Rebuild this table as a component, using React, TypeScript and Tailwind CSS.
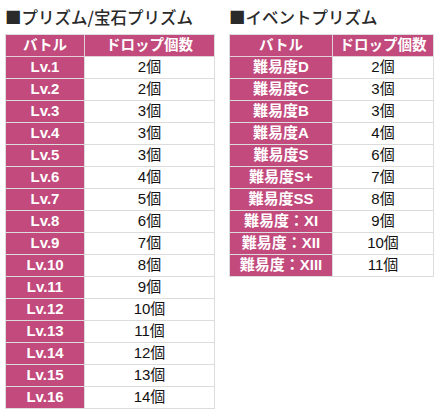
const PRISM = Array.from({ length: 16 }, (_, i) => ({
  label: `Lv.${i + 1}`,
  value: `${[2, 2, 3, 3, 3, 4, 5, 6, 7, 8, 9, 10, 11, 12, 13, 14][i]}個`,
}));

const EVENT = [
  { label: "難易度D", value: "2個" },
  { label: "難易度C", value: "3個" },
  { label: "難易度B", value: "3個" },
  { label: "難易度A", value: "4個" },
  { label: "難易度S", value: "6個" },
  { label: "難易度S+", value: "7個" },
  { label: "難易度SS", value: "8個" },
  { label: "難易度：XI", value: "9個" },
  { label: "難易度：XII", value: "10個" },
  { label: "難易度：XIII", value: "11個" },
];

type Row = { label: string; value: string };

function DropTable({
  title,
  rows,
  labelW,
  valueW,
}: {
  title: string;
  rows: Row[];
  labelW: string;
  valueW: string;
}) {
  return (
    <div className="flex flex-col">
      <h2 className="h-[34px] pt-[5px] font-['Noto_Sans_CJK_JP',sans-serif] text-[16.5px] font-medium leading-[24px] text-[#2a2a2a]">
        {title}
      </h2>
      <div className="border border-[#dcdcdc] border-b-0">
        <div className="flex h-[22px] border-b border-[#e2d0d8] bg-[#c24a7c] text-[14.5px] font-bold text-white">
          <div className={`${labelW} flex items-center justify-center border-r border-[#e2d0d8]`}>
            バトル
          </div>
          <div className={`${valueW} flex items-center justify-center`}>ドロップ個数</div>
        </div>
        {rows.map((r) => (
          <div key={r.label} className="flex h-[22px] border-b border-[#dcdcdc] text-[15px]">
            <div
              className={`${labelW} flex items-center justify-center border-r border-[#dcdcdc] bg-[#c24a7c] font-bold text-white`}
            >
              {r.label}
            </div>
            <div className={`${valueW} flex items-center justify-center bg-white text-[#111]`}>
              {r.value}
            </div>
          </div>
        ))}
      </div>
    </div>
  );
}

export default function App() {
  return (
    <div
      className="flex h-[413px] w-[440px] gap-[14px] overflow-hidden bg-white pl-[5px]"
      style={{ fontFamily: '"Liberation Sans", "Noto Sans CJK JP", sans-serif' }}
    >
      <DropTable title="■プリズム/宝石プリズム" rows={PRISM} labelW="w-[79px]" valueW="w-[129px]" />
      <DropTable title="■イベントプリズム" rows={EVENT} labelW="w-[103px]" valueW="w-[100px]" />
    </div>
  );
}
